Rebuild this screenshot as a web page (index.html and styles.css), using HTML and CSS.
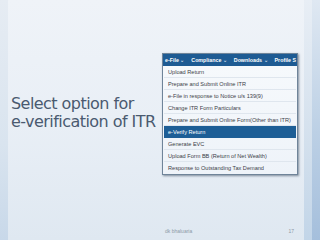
FILE: index.html
```html
<!DOCTYPE html>
<html>
<head>
<meta charset="utf-8">
<link rel="stylesheet" href="styles.css">
</head>
<body>
<div class="slide">
  <div class="edge-left"></div>
  <div class="main">
    <div class="content">
      <h1 class="title">Select option for<br>e-verification of ITR</h1>
      <div class="shot">
        <div class="menubar">
          <span class="mi">e-File <i>&#8964;</i></span>
          <span class="mi">Compliance <i>&#8964;</i></span>
          <span class="mi">Downloads <i>&#8964;</i></span>
          <span class="mi">Profile S</span>
        </div>
        <ul class="menu">
          <li>Upload Return</li>
          <li>Prepare and Submit Online ITR</li>
          <li>e-File in response to Notice u/s 139(9)</li>
          <li>Change ITR Form Particulars</li>
          <li>Prepare and Submit Online Form(Other than ITR)</li>
          <li class="sel">e-Verify Return</li>
          <li>Generate EVC</li>
          <li>Upload Form BB (Return of Net Wealth)</li>
          <li>Response to Outstanding Tax Demand</li>
        </ul>
      </div>
    </div>
    <div class="footer">
      <span class="author">dk bhaluaria</span>
      <span class="page">17</span>
    </div>
  </div>
  <div class="edge-right"><div class="band1"></div><div class="band2"></div></div>
</div>
</body>
</html>
```

FILE: styles.css
```css
html, body {
  margin: 0;
  padding: 0;
}
.slide {
  width: 320px;
  height: 240px;
  display: flex;
  overflow: hidden;
  background: linear-gradient(180deg, #eff3f8 0%, #e9eff6 50%, #dfe8f1 100%);
  font-family: "Liberation Sans", Arial, sans-serif;
}
.edge-left {
  width: 8px;
  background: linear-gradient(180deg, #e6ecf3 0%, #d9e4ef 60%, #c8d8e9 100%);
}
.main {
  flex: 1;
  display: flex;
  flex-direction: column;
}
.content {
  flex: 1;
  display: flex;
  align-items: flex-start;
  padding-top: 53px;
}
.title {
  margin: 42px 0 0 3px;
  width: 151px;
  font-family: "DejaVu Sans", sans-serif;
  font-weight: normal;
  font-size: 16px;
  line-height: 18px;
  color: #4a5a70;
  letter-spacing: -0.55px;
  white-space: nowrap;
}
.shot {
  width: 134px;
  background: #f3f7fb;
  border: 1px solid #6f8499;
  box-shadow: 1px 1px 2px rgba(40, 60, 80, 0.55);
}
.menubar {
  height: 12px;
  background: #1e5b93;
  display: flex;
  align-items: center;
  gap: 7px;
  padding-left: 2px;
  white-space: nowrap;
  overflow: hidden;
  color: #ffffff;
  font-size: 5.3px;
  font-weight: bold;
}
.mi i {
  font-style: normal;
  font-size: 5px;
  color: #c9d8e8;
}
.menu {
  list-style: none;
  margin: 0;
  padding: 0 1px 0 1px;
  background: linear-gradient(180deg, #f6f9fc, #eef3f9);
}
.menu li {
  height: 12px;
  line-height: 12px;
  padding-left: 4px;
  font-size: 5.6px;
  color: #3c4148;
  border-bottom: 1px solid #dfe6ee;
  box-sizing: border-box;
  white-space: nowrap;
}
.menu li:last-child {
  border-bottom: none;
}
.menu li.sel {
  background: #1d5e96;
  color: #ffffff;
  border-bottom-color: #1d5e96;
}
.footer {
  height: 20px;
  display: flex;
  justify-content: space-between;
  align-items: flex-start;
  padding: 8px 10px 0 157px;
  box-sizing: border-box;
  font-size: 5px;
  color: #8d99a6;
}
.edge-right {
  width: 16px;
  display: flex;
}
.band1 {
  width: 8px;
  background: linear-gradient(180deg, #e8eef5 0%, #d3e0ed 60%, #c2d5e8 100%);
}
.band2 {
  width: 8px;
  background: linear-gradient(180deg, #dfe8f2 0%, #bcd0e5 55%, #a5bfdc 100%);
}
```
